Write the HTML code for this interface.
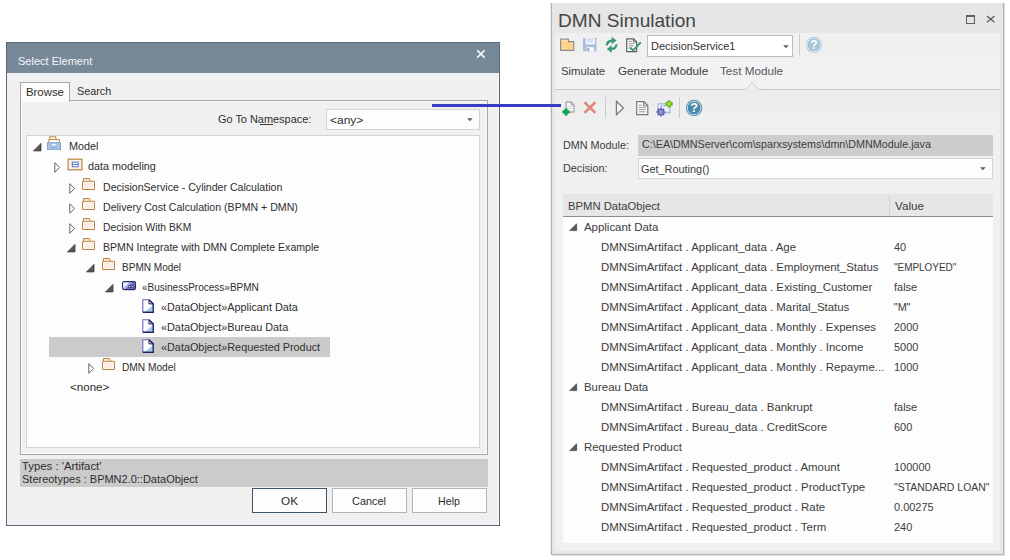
<!DOCTYPE html>
<html lang="en"><head><meta charset="utf-8"><title>DMN Simulation - Select Element</title>
<style>
html,body{margin:0;padding:0;background:#fff;}
body{width:1010px;height:560px;position:relative;overflow:hidden;font-family:"Liberation Sans", sans-serif;}
#root{position:absolute;left:0;top:0;width:1010px;height:560px;overflow:hidden;background:#fff;}
#root div,#root span,#root svg{position:absolute;}
.t{white-space:pre;line-height:20px;height:20px;}
</style></head><body><div id="root">
<div style="left:6px;top:42px;width:494px;height:484px;background:#f0f0f0;border:1px solid #596979;box-sizing:border-box;"></div>
<div style="left:498px;top:73px;width:1px;height:452px;background:#fafafa;"></div>
<div style="left:7px;top:43px;width:492px;height:30px;background:#778899;"></div>
<svg style="left:476px;top:49px" width="10" height="10" viewBox="0 0 10 10"><path d="M1.2 1.2 L8.6 8.6 M8.6 1.2 L1.2 8.6" stroke="#ffffff" stroke-width="1.5" fill="none"/></svg>
<div style="left:20px;top:100px;width:468px;height:355px;background:#f0f0f0;border:1px solid #a6a6a6;box-sizing:border-box;"></div>
<div style="left:21px;top:101px;width:466px;height:353px;border:1px solid #fbfbfb;box-sizing:border-box;"></div>
<div style="left:485px;top:102px;width:2px;height:351px;background:#f8f8f8;"></div>
<div style="left:20px;top:82px;width:50px;height:20px;background:#fcfcfc;border:1px solid #a6a6a6;box-sizing:border-box;border-bottom:none;"></div>
<div style="left:260px;top:124px;width:13px;height:1px;background:#383838;"></div>
<div style="left:326px;top:109px;width:154px;height:21px;background:#fdfdfd;border:1px solid #d2d2d2;box-sizing:border-box;"></div>
<svg style="left:466.8px;top:117.8px" width="6" height="4" viewBox="0 0 6 4"><path d="M0.2 0.3 H5.6 L2.9 3.2 Z" fill="#5a5a5a"/></svg>
<div style="left:26px;top:135px;width:454px;height:313px;background:#fdfdfd;border:1px solid #d4d4d4;box-sizing:border-box;"></div>
<div style="left:49px;top:337px;width:281px;height:20px;background:#cbcbcb;"></div>
<div style="left:20px;top:459px;width:468px;height:28px;background:#cbcbcb;"></div>
<div style="left:252px;top:488px;width:75px;height:25px;background:#fdfdfd;border:1px solid #3f5468;box-sizing:border-box;"></div>
<div style="left:332px;top:488px;width:75px;height:25px;background:#fdfdfd;border:1px solid #b4b4b4;box-sizing:border-box;"></div>
<div style="left:412px;top:488px;width:75px;height:25px;background:#fdfdfd;border:1px solid #b4b4b4;box-sizing:border-box;"></div>
<svg style="left:32.70px;top:142.50px" width="9" height="9" viewBox="0 0 9 9"><path d="M8 0.4 V7.9 H0.5 Z" fill="#595959" stroke="#3a3a3a" stroke-width="0.8"/></svg>
<svg style="left:46px;top:136px" width="16" height="14" viewBox="0 0 16 14"><path d="M3.7 3.2 V0.8 H9.9 V3.2" fill="#fefaf6" stroke="#bb853f" stroke-width="1"/><path d="M2.8 6.4 V3.5 H13.3 V6.4" fill="#fefaf6" stroke="#bb853f" stroke-width="1"/><rect x="1.5" y="6.7" width="13" height="7" fill="#a9c4e4" stroke="#7ba1d0" stroke-width="1"/><rect x="6" y="7.9" width="3.6" height="1.5" fill="#fafcff"/><path d="M5.3 11.4 H10.4" stroke="#86a9d6" stroke-width="0.9"/></svg>
<svg style="left:54.00px;top:162.00px" width="8" height="12" viewBox="0 0 8 12"><path d="M0.8 0.7 L5.7 5.5 L0.8 10.3 Z" fill="#fdfdfd" stroke="#666" stroke-width="1"/></svg>
<svg style="left:66.5px;top:157.5px" width="16" height="13" viewBox="0 0 16 13"><rect x="1.1" y="1.2" width="13.8" height="10.6" fill="#fdf1eb" stroke="#bb853f" stroke-width="1.2"/><rect x="5.2" y="4.1" width="6" height="4.7" fill="#f6f8ff" stroke="#3d62c8" stroke-width="0.85"/><path d="M5.2 6.45 H11.2" stroke="#3d62c8" stroke-width="0.85"/></svg>
<svg style="left:68.60px;top:183.00px" width="8" height="12" viewBox="0 0 8 12"><path d="M0.8 0.7 L5.7 5.5 L0.8 10.3 Z" fill="#fdfdfd" stroke="#666" stroke-width="1"/></svg>
<svg style="left:82px;top:178px" width="13" height="12" viewBox="0 0 13 12"><path d="M0.5 11.5 V3.3 H1.5 V0.5 H7.5 L8.5 3.3 H12.5 V11.5 Z" fill="#fefaf8" stroke="#bb853f" stroke-width="1"/><rect x="1.8" y="4.6" width="9.4" height="5.6" fill="#fdebe5"/><path d="M1.5 3.3 H8.5" stroke="#bb853f" stroke-width="1"/><path d="M2.3 1.9 H7.2" stroke="#e8cfae" stroke-width="0.8"/></svg>
<svg style="left:68.60px;top:203.00px" width="8" height="12" viewBox="0 0 8 12"><path d="M0.8 0.7 L5.7 5.5 L0.8 10.3 Z" fill="#fdfdfd" stroke="#666" stroke-width="1"/></svg>
<svg style="left:82px;top:198px" width="13" height="12" viewBox="0 0 13 12"><path d="M0.5 11.5 V3.3 H1.5 V0.5 H7.5 L8.5 3.3 H12.5 V11.5 Z" fill="#fefaf8" stroke="#bb853f" stroke-width="1"/><rect x="1.8" y="4.6" width="9.4" height="5.6" fill="#fdebe5"/><path d="M1.5 3.3 H8.5" stroke="#bb853f" stroke-width="1"/><path d="M2.3 1.9 H7.2" stroke="#e8cfae" stroke-width="0.8"/></svg>
<svg style="left:68.60px;top:223.00px" width="8" height="12" viewBox="0 0 8 12"><path d="M0.8 0.7 L5.7 5.5 L0.8 10.3 Z" fill="#fdfdfd" stroke="#666" stroke-width="1"/></svg>
<svg style="left:82px;top:218px" width="13" height="12" viewBox="0 0 13 12"><path d="M0.5 11.5 V3.3 H1.5 V0.5 H7.5 L8.5 3.3 H12.5 V11.5 Z" fill="#fefaf8" stroke="#bb853f" stroke-width="1"/><rect x="1.8" y="4.6" width="9.4" height="5.6" fill="#fdebe5"/><path d="M1.5 3.3 H8.5" stroke="#bb853f" stroke-width="1"/><path d="M2.3 1.9 H7.2" stroke="#e8cfae" stroke-width="0.8"/></svg>
<svg style="left:66.80px;top:243.50px" width="9" height="9" viewBox="0 0 9 9"><path d="M8 0.4 V7.9 H0.5 Z" fill="#595959" stroke="#3a3a3a" stroke-width="0.8"/></svg>
<svg style="left:82px;top:238px" width="13" height="12" viewBox="0 0 13 12"><path d="M0.5 11.5 V3.3 H1.5 V0.5 H7.5 L8.5 3.3 H12.5 V11.5 Z" fill="#fefaf8" stroke="#bb853f" stroke-width="1"/><rect x="1.8" y="4.6" width="9.4" height="5.6" fill="#fdebe5"/><path d="M1.5 3.3 H8.5" stroke="#bb853f" stroke-width="1"/><path d="M2.3 1.9 H7.2" stroke="#e8cfae" stroke-width="0.8"/></svg>
<svg style="left:85.90px;top:263.50px" width="9" height="9" viewBox="0 0 9 9"><path d="M8 0.4 V7.9 H0.5 Z" fill="#595959" stroke="#3a3a3a" stroke-width="0.8"/></svg>
<svg style="left:102px;top:258px" width="13" height="12" viewBox="0 0 13 12"><path d="M0.5 11.5 V3.3 H1.5 V0.5 H7.5 L8.5 3.3 H12.5 V11.5 Z" fill="#fefaf8" stroke="#bb853f" stroke-width="1"/><rect x="1.8" y="4.6" width="9.4" height="5.6" fill="#fdebe5"/><path d="M1.5 3.3 H8.5" stroke="#bb853f" stroke-width="1"/><path d="M2.3 1.9 H7.2" stroke="#e8cfae" stroke-width="0.8"/></svg>
<svg style="left:104.70px;top:283.50px" width="9" height="9" viewBox="0 0 9 9"><path d="M8 0.4 V7.9 H0.5 Z" fill="#595959" stroke="#3a3a3a" stroke-width="0.8"/></svg>
<svg style="left:122px;top:281px" width="15" height="10" viewBox="0 0 15 10"><defs><linearGradient id="bpg" gradientUnits="userSpaceOnUse" x1="0" y1="0" x2="10" y2="10"><stop offset="0" stop-color="#fdfdff"/><stop offset="0.40" stop-color="#f2f4ff"/><stop offset="0.43" stop-color="#a9b9f2"/><stop offset="0.57" stop-color="#9aa8ea"/><stop offset="0.6" stop-color="#7878c8"/><stop offset="1" stop-color="#6c6cc0"/></linearGradient></defs><rect x="0.6" y="0.6" width="12.9" height="7.9" rx="1.6" fill="url(#bpg)" stroke="#2a2a68" stroke-width="1.1"/><path d="M1.6 8.6 H12.6" stroke="#2a2a68" stroke-width="1.2"/><circle cx="7.5" cy="5.6" r="1.15" fill="#e8ecff" stroke="#20205a" stroke-width="0.9"/><circle cx="10.3" cy="5.6" r="1.15" fill="#e8ecff" stroke="#20205a" stroke-width="0.9"/></svg>
<svg style="left:142px;top:299px" width="12" height="14" viewBox="0 0 12 14"><path d="M0.8 0.7 H7 L11.2 4.9 V13.2 H0.8 Z" fill="#fefeff"/><path d="M10.6 6.6 V12.6 H3 Z" fill="#a6c8f4"/><path d="M7 0.7 V4.9 H11.2 Z" fill="#dfe8fb"/><path d="M0.8 13.2 V0.7 H7" fill="none" stroke="#6a6ac2" stroke-width="1.1"/><path d="M7 0.7 L11.2 4.9 V13.2 H0.8" fill="none" stroke="#1e1e60" stroke-width="1.4"/><path d="M7 0.7 V4.9 H11.2" fill="none" stroke="#1e1e60" stroke-width="1"/></svg>
<svg style="left:142px;top:319px" width="12" height="14" viewBox="0 0 12 14"><path d="M0.8 0.7 H7 L11.2 4.9 V13.2 H0.8 Z" fill="#fefeff"/><path d="M10.6 6.6 V12.6 H3 Z" fill="#a6c8f4"/><path d="M7 0.7 V4.9 H11.2 Z" fill="#dfe8fb"/><path d="M0.8 13.2 V0.7 H7" fill="none" stroke="#6a6ac2" stroke-width="1.1"/><path d="M7 0.7 L11.2 4.9 V13.2 H0.8" fill="none" stroke="#1e1e60" stroke-width="1.4"/><path d="M7 0.7 V4.9 H11.2" fill="none" stroke="#1e1e60" stroke-width="1"/></svg>
<svg style="left:142px;top:339px" width="12" height="14" viewBox="0 0 12 14"><path d="M0.8 0.7 H7 L11.2 4.9 V13.2 H0.8 Z" fill="#fefeff"/><path d="M10.6 6.6 V12.6 H3 Z" fill="#a6c8f4"/><path d="M7 0.7 V4.9 H11.2 Z" fill="#dfe8fb"/><path d="M0.8 13.2 V0.7 H7" fill="none" stroke="#6a6ac2" stroke-width="1.1"/><path d="M7 0.7 L11.2 4.9 V13.2 H0.8" fill="none" stroke="#1e1e60" stroke-width="1.4"/><path d="M7 0.7 V4.9 H11.2" fill="none" stroke="#1e1e60" stroke-width="1"/></svg>
<svg style="left:87.60px;top:363.00px" width="8" height="12" viewBox="0 0 8 12"><path d="M0.8 0.7 L5.7 5.5 L0.8 10.3 Z" fill="#fdfdfd" stroke="#666" stroke-width="1"/></svg>
<svg style="left:102px;top:358px" width="13" height="12" viewBox="0 0 13 12"><path d="M0.5 11.5 V3.3 H1.5 V0.5 H7.5 L8.5 3.3 H12.5 V11.5 Z" fill="#fefaf8" stroke="#bb853f" stroke-width="1"/><rect x="1.8" y="4.6" width="9.4" height="5.6" fill="#fdebe5"/><path d="M1.5 3.3 H8.5" stroke="#bb853f" stroke-width="1"/><path d="M2.3 1.9 H7.2" stroke="#e8cfae" stroke-width="0.8"/></svg>
<div style="left:550px;top:3px;width:1px;height:551px;background:#ececec;"></div>
<div style="left:551px;top:3px;width:453px;height:551.6px;background:#e6e6e6;border:1px solid #b2b2b2;box-sizing:border-box;border-top:none;"></div>
<div style="left:1004px;top:3px;width:1px;height:552px;background:#dedede;"></div>
<div style="left:552px;top:554.6px;width:453px;height:1px;background:#e2e2e2;"></div>
<div style="left:555px;top:33px;width:445px;height:518px;background:#f0f0f0;"></div>
<div style="left:555px;top:58.5px;width:445px;height:30.5px;background:#f2f2f2;"></div>
<div style="left:555px;top:90px;width:445px;height:34px;background:linear-gradient(#ececec,#f0f0f0);"></div>
<div style="left:555px;top:89px;width:445px;height:1px;background:#c9c9c9;"></div>
<svg style="left:745px;top:81px" width="15" height="10" viewBox="0 0 15 10"><path d="M1 8.5 L7.2 1.6 L13.4 8.5 V9.6 H1 Z" fill="#f0f0f0"/><path d="M1 8.5 L7.2 1.6 L13.4 8.5" fill="none" stroke="#c9c9c9" stroke-width="1"/></svg>
<div style="left:966px;top:15px;width:9px;height:9px;border:1px solid #606060;box-sizing:border-box;border-top-width:2px;"></div>
<svg style="left:986.3px;top:15.1px" width="10" height="9" viewBox="0 0 10 9"><path d="M0.9 0.9 L8.5 7.3 M8.5 0.9 L0.9 7.3" stroke="#5c5c5c" stroke-width="1.25" fill="none"/></svg>
<svg style="left:559.5px;top:38.4px" width="15" height="13" viewBox="0 0 15 13"><path d="M0.6 12.4 V1.1 H8.4 V3.6 H13.8 V12.4 Z" fill="#fbd58e" stroke="#8c8c8c" stroke-width="1.1"/><path d="M1.4 2.3 H7.6" stroke="#fde3ae" stroke-width="1"/></svg>
<svg style="left:583px;top:38px" width="14" height="14" viewBox="0 0 14 14"><rect x="0" y="0" width="13.4" height="13.3" fill="#a9bddd"/><rect x="2.7" y="0.3" width="9.3" height="6" fill="#fbfcfe"/><path d="M4 1.9 H10.6 M4 3.9 H10.6" stroke="#a4b8dc" stroke-width="0.8"/><rect x="3.5" y="9.2" width="7.6" height="4.1" fill="#fbfcfe"/><rect x="4.3" y="10" width="2" height="3.3" fill="#8ea6d0"/><rect x="12.2" y="0.6" width="0.8" height="0.8" fill="#6a82b8"/></svg>
<svg style="left:604.3px;top:36.2px" width="15.4" height="17.6" viewBox="0 0 14 16"><path d="M1.6 8.4 A5.2 5.2 0 0 1 7 3.2 V0.6 L11.4 4.2 L7 7.6 V5.4 A3.2 3.2 0 0 0 3.6 8.6 Z" fill="#3a9a72"/><path d="M12.4 7.6 A5.2 5.2 0 0 1 7 12.8 V15.4 L2.6 11.8 L7 8.4 V10.6 A3.2 3.2 0 0 0 10.4 7.4 Z" fill="#3a9a72"/></svg>
<svg style="left:626px;top:38px" width="16" height="15" viewBox="0 0 16 15"><path d="M0.7 0.8 H7.6 L10.6 3.8 V13.6 H0.7 Z" fill="#fafafa" stroke="#606060" stroke-width="1.2"/><path d="M7.4 0.8 V4 H10.6" fill="none" stroke="#606060" stroke-width="1"/><path d="M2.6 3.4 H6 M2.6 5.6 H8 M2.6 7.8 H8 M2.6 10 H5" stroke="#8a8a8a" stroke-width="0.9"/><path d="M4 9.4 L7.2 12.4 L14.8 4.2" fill="none" stroke="#3a9a72" stroke-width="2"/></svg>
<div style="left:647px;top:35px;width:146px;height:22px;background:#ffffff;border:1px solid #bcbcbc;box-sizing:border-box;"></div>
<svg style="left:782.8px;top:44.6px" width="6" height="4" viewBox="0 0 6 4"><path d="M0.2 0.3 H5.6 L2.9 3.2 Z" fill="#5a5a5a"/></svg>
<div style="left:799px;top:34px;width:1px;height:21px;background:#cbcbcb;"></div>
<svg style="left:805px;top:36px" width="18" height="18" viewBox="0 0 18 18"><circle cx="9" cy="8.8" r="8" fill="#a6c4d5"/><circle cx="9" cy="8.8" r="6.8" fill="none" stroke="#f2f6f8" stroke-width="0.8"/><text x="9" y="13.1" font-family="Liberation Sans, sans-serif" font-weight="bold" font-size="12" fill="#ffffff" text-anchor="middle">?</text></svg>
<svg style="left:561.5px;top:100.5px" width="14" height="15" viewBox="0 0 14 15"><path d="M4.1 1 H9.4 L12 3.6 V11 H4.1 Z" fill="#fbfbfb" stroke="#8c8c8c" stroke-width="1"/><path d="M9.2 1 V3.8 H12" fill="none" stroke="#8c8c8c" stroke-width="0.9"/><path d="M5.6 3.6 H6.4 M5.6 5.6 H10.4 M5.6 7.6 H10.4" stroke="#c4c4c4" stroke-width="0.8"/><path d="M4.05 7.4 V14.4 M0.5 10.9 H7.6" stroke="#10a050" stroke-width="3.1"/></svg>
<svg style="left:582.6px;top:100.9px" width="14" height="13" viewBox="0 0 14 13"><path d="M1.5 1.3 L12.3 11.9 M12.3 1.3 L1.5 11.9" stroke="#dd8a7c" stroke-width="2.7" fill="none"/></svg>
<div style="left:605px;top:97px;width:1px;height:21px;background:#cbcbcb;"></div>
<svg style="left:615px;top:100px" width="10" height="16" viewBox="0 0 10 16"><path d="M1.4 1.3 L8.4 8 L1.4 14.8 Z" fill="#f6f6f6" stroke="#787878" stroke-width="1.2"/></svg>
<svg style="left:636px;top:101px" width="13" height="15" viewBox="0 0 13 15"><path d="M0.7 0.7 H7.8 L11.8 4.6 V13.6 H0.7 Z" fill="#fbfbfb" stroke="#787878" stroke-width="1.2"/><path d="M7.6 0.7 V4.8 H11.8" fill="none" stroke="#787878" stroke-width="1"/><path d="M2.8 6.4 H9.6 M2.8 8.6 H9.6 M2.8 10.8 H9.6 M2.8 4.2 H5.6" stroke="#8a8a8a" stroke-width="0.9"/></svg>
<svg style="left:655.5px;top:99.5px" width="18" height="17" viewBox="0 0 18 17"><defs><linearGradient id="wg" x1="0" y1="0" x2="1" y2="1"><stop offset="0" stop-color="#ffffff"/><stop offset="1" stop-color="#dfe6f8"/></linearGradient></defs><rect x="2.1" y="3.9" width="11.8" height="8.9" fill="url(#wg)" stroke="#97a7cf" stroke-width="1"/><path d="M4.4 5.9 H6.4 M7.6 5.9 H9.6" stroke="#4a78e0" stroke-width="1"/><circle cx="4.9" cy="12" r="3.5" fill="#6a68cc"/><path d="M4.9 7.4 V16.6 M0.3 12 H9.5 M1.7 8.8 L8.1 15.2 M8.1 8.8 L1.7 15.2" stroke="#5f5cc4" stroke-width="1.7"/><circle cx="4.9" cy="12" r="2.4" fill="#8482dc"/><circle cx="4.9" cy="12" r="1" fill="#86e000"/><path d="M13.1 0.4 V7.3 M9.6 3.85 H16.6" stroke="#48a008" stroke-width="3.2"/><path d="M13.1 1.3 V6.4 M10.5 3.85 H15.7" stroke="#b4f028" stroke-width="1.3"/></svg>
<div style="left:679px;top:97px;width:1px;height:21px;background:#cbcbcb;"></div>
<svg style="left:685px;top:99px" width="19" height="19" viewBox="0 0 19 19"><circle cx="9.1" cy="9" r="8.2" fill="#4a8ba9"/><circle cx="9.1" cy="9" r="6.9" fill="none" stroke="#eef4f7" stroke-width="0.8"/><text x="9.1" y="13.4" font-family="Liberation Sans, sans-serif" font-weight="bold" font-size="12.5" fill="#ffffff" text-anchor="middle">?</text></svg>
<div style="left:638px;top:135px;width:355px;height:21px;background:#cdcdcd;"></div>
<div style="left:638px;top:158px;width:355px;height:21px;background:#fdfdfd;border:1px solid #d2d2d2;box-sizing:border-box;"></div>
<svg style="left:979.8px;top:166.8px" width="6" height="4" viewBox="0 0 6 4"><path d="M0.2 0.3 H5.6 L2.9 3.2 Z" fill="#5a5a5a"/></svg>
<div style="left:563px;top:194px;width:430px;height:348.5px;background:#fdfdfd;"></div>
<div style="left:563px;top:194px;width:430px;height:22px;background:#e6e6e6;"></div>
<div style="left:563px;top:216px;width:430px;height:1px;background:#8e8e8e;"></div>
<div style="left:889px;top:195px;width:1px;height:21px;background:#d4d4d4;"></div>
<svg style="left:569px;top:223.4px" width="9" height="9" viewBox="0 0 9 9"><path d="M7.6 0.8 V7.6 H0.8 Z" fill="#5a5a5a" stroke="#404040" stroke-width="0.7"/></svg>
<svg style="left:569px;top:383.4px" width="9" height="9" viewBox="0 0 9 9"><path d="M7.6 0.8 V7.6 H0.8 Z" fill="#5a5a5a" stroke="#404040" stroke-width="0.7"/></svg>
<svg style="left:569px;top:443.4px" width="9" height="9" viewBox="0 0 9 9"><path d="M7.6 0.8 V7.6 H0.8 Z" fill="#5a5a5a" stroke="#404040" stroke-width="0.7"/></svg>
<div style="left:432px;top:104px;width:129px;height:3px;background:#353dc5;"></div>
<span class="t" id="t0" style="left:17.99px;top:51.00px;font-size:10.9px;color:#f4f6f8;transform:scaleX(1.0130);transform-origin:0 0;">Select Element</span>
<span class="t" id="t1" style="left:26.11px;top:82.00px;font-size:11.5px;color:#2e2e2e;transform:scaleX(0.9880);transform-origin:0 0;">Browse</span>
<span class="t" id="t2" style="left:76.93px;top:81.00px;font-size:11.5px;color:#2e2e2e;transform:scaleX(0.9386);transform-origin:0 0;">Search</span>
<span class="t" id="t3" style="left:217.53px;top:109.00px;font-size:11.5px;color:#2e2e2e;transform:scaleX(0.9498);transform-origin:0 0;">Go To Namespace:</span>
<span class="t" id="t4" style="left:330.38px;top:110.00px;font-size:11.5px;color:#2e2e2e;transform:scaleX(1.0411);transform-origin:0 0;">&lt;any&gt;</span>
<span class="t" id="t5" style="left:22.11px;top:456.00px;font-size:11.5px;color:#2e2e2e;transform:scaleX(0.9869);transform-origin:0 0;">Types : &#x27;Artifact&#x27;</span>
<span class="t" id="t6" style="left:22.12px;top:469.00px;font-size:11.5px;color:#2e2e2e;transform:scaleX(0.9555);transform-origin:0 0;">Stereotypes : BPMN2.0::DataObject</span>
<span class="t" id="t7" style="left:280.99px;top:491.00px;font-size:11.5px;color:#2e2e2e;transform:scaleX(1.0226);transform-origin:0 0;">OK</span>
<span class="t" id="t8" style="left:352.03px;top:491.00px;font-size:11.5px;color:#2e2e2e;transform:scaleX(0.9494);transform-origin:0 0;">Cancel</span>
<span class="t" id="t9" style="left:438.04px;top:491.00px;font-size:11.5px;color:#2e2e2e;transform:scaleX(0.9300);transform-origin:0 0;">Help</span>
<span class="t" id="t10" style="left:69.03px;top:136.00px;font-size:11.5px;color:#2e2e2e;transform:scaleX(0.9416);transform-origin:0 0;">Model</span>
<span class="t" id="t11" style="left:88.23px;top:156.00px;font-size:11.5px;color:#2e2e2e;transform:scaleX(0.9384);transform-origin:0 0;">data modeling</span>
<span class="t" id="t12" style="left:102.74px;top:177.00px;font-size:11.5px;color:#2e2e2e;transform:scaleX(0.9197);transform-origin:0 0;">DecisionService - Cylinder Calculation</span>
<span class="t" id="t13" style="left:102.74px;top:197.00px;font-size:11.5px;color:#2e2e2e;transform:scaleX(0.9195);transform-origin:0 0;">Delivery Cost Calculation (BPMN + DMN)</span>
<span class="t" id="t14" style="left:102.75px;top:217.00px;font-size:11.5px;color:#2e2e2e;transform:scaleX(0.8972);transform-origin:0 0;">Decision With BKM</span>
<span class="t" id="t15" style="left:102.74px;top:237.00px;font-size:11.5px;color:#2e2e2e;transform:scaleX(0.9192);transform-origin:0 0;">BPMN Integrate with DMN Complete Example</span>
<span class="t" id="t16" style="left:121.96px;top:257.00px;font-size:11.5px;color:#2e2e2e;transform:scaleX(0.8723);transform-origin:0 0;">BPMN Model</span>
<span class="t" id="t17" style="left:142.06px;top:277.00px;font-size:11.5px;color:#2e2e2e;transform:scaleX(0.8701);transform-origin:0 0;">«BusinessProcess»BPMN</span>
<span class="t" id="t18" style="left:160.73px;top:297.00px;font-size:11.5px;color:#2e2e2e;transform:scaleX(0.9427);transform-origin:0 0;">«DataObject»Applicant Data</span>
<span class="t" id="t19" style="left:160.73px;top:317.00px;font-size:11.5px;color:#2e2e2e;transform:scaleX(0.9427);transform-origin:0 0;">«DataObject»Bureau Data</span>
<span class="t" id="t20" style="left:160.73px;top:337.00px;font-size:11.5px;color:#2e2e2e;transform:scaleX(0.9427);transform-origin:0 0;">«DataObject»Requested Product</span>
<span class="t" id="t21" style="left:121.96px;top:357.00px;font-size:11.5px;color:#2e2e2e;transform:scaleX(0.8844);transform-origin:0 0;">DMN Model</span>
<span class="t" id="t22" style="left:70.10px;top:377.00px;font-size:11.5px;color:#2e2e2e;transform:scaleX(1.0073);transform-origin:0 0;">&lt;none&gt;</span>
<span class="t" id="t23" style="left:557.78px;top:11.00px;font-size:18.2px;color:#454545;transform:scaleX(1.0495);transform-origin:0 0;">DMN Simulation</span>
<span class="t" id="t24" style="left:651.19px;top:36.00px;font-size:10.8px;color:#333;transform:scaleX(1.0105);transform-origin:0 0;">DecisionService1</span>
<span class="t" id="t25" style="left:560.88px;top:61.00px;font-size:10.8px;color:#3c3c3c;transform:scaleX(1.0496);transform-origin:0 0;">Simulate</span>
<span class="t" id="t26" style="left:617.86px;top:61.00px;font-size:10.8px;color:#3c3c3c;transform:scaleX(1.0810);transform-origin:0 0;">Generate Module</span>
<span class="t" id="t27" style="left:720.46px;top:61.00px;font-size:10.8px;color:#585862;transform:scaleX(1.0821);transform-origin:0 0;">Test Module</span>
<span class="t" id="t28" style="left:563.23px;top:135.00px;font-size:11.5px;color:#3c3c3c;transform:scaleX(0.9387);transform-origin:0 0;">DMN Module:</span>
<span class="t" id="t29" style="left:642.03px;top:134.00px;font-size:11.5px;color:#3c3c3c;transform:scaleX(0.9359);transform-origin:0 0;">C:\EA\DMNServer\com\sparxsystems\dmn\DMNModule.java</span>
<span class="t" id="t30" style="left:563.23px;top:158.00px;font-size:11.5px;color:#3c3c3c;transform:scaleX(0.9427);transform-origin:0 0;">Decision:</span>
<span class="t" id="t31" style="left:641.33px;top:159.00px;font-size:11.5px;color:#3c3c3c;transform:scaleX(0.9469);transform-origin:0 0;">Get_Routing()</span>
<span class="t" id="t32" style="left:567.98px;top:196.00px;font-size:10.8px;color:#3c3c3c;transform:scaleX(1.0429);transform-origin:0 0;">BPMN DataObject</span>
<span class="t" id="t33" style="left:895.06px;top:196.00px;font-size:10.8px;color:#3c3c3c;transform:scaleX(1.0810);transform-origin:0 0;">Value</span>
<span class="t" id="t34" style="left:583.67px;top:217.00px;font-size:10.8px;color:#3c3c3c;transform:scaleX(1.0584);transform-origin:0 0;">Applicant Data</span>
<span class="t" id="t35" style="left:601.07px;top:237.00px;font-size:10.8px;color:#3c3c3c;transform:scaleX(1.0584);transform-origin:0 0;">DMNSimArtifact . Applicant_data . Age</span>
<span class="t" id="t36" style="left:893.79px;top:237.00px;font-size:10.8px;color:#3c3c3c;transform:scaleX(1.0150);transform-origin:0 0;">40</span>
<span class="t" id="t37" style="left:601.07px;top:257.00px;font-size:10.8px;color:#3c3c3c;transform:scaleX(1.0584);transform-origin:0 0;">DMNSimArtifact . Applicant_data . Employment_Status</span>
<span class="t" id="t38" style="left:893.84px;top:257.00px;font-size:10.8px;color:#3c3c3c;transform:scaleX(0.9191);transform-origin:0 0;">&quot;EMPLOYED&quot;</span>
<span class="t" id="t39" style="left:601.07px;top:277.00px;font-size:10.8px;color:#3c3c3c;transform:scaleX(1.0584);transform-origin:0 0;">DMNSimArtifact . Applicant_data . Existing_Customer</span>
<span class="t" id="t40" style="left:893.79px;top:277.00px;font-size:10.8px;color:#3c3c3c;transform:scaleX(1.0150);transform-origin:0 0;">false</span>
<span class="t" id="t41" style="left:601.07px;top:297.00px;font-size:10.8px;color:#3c3c3c;transform:scaleX(1.0584);transform-origin:0 0;">DMNSimArtifact . Applicant_data . Marital_Status</span>
<span class="t" id="t42" style="left:893.80px;top:297.00px;font-size:10.8px;color:#3c3c3c;">&quot;M&quot;</span>
<span class="t" id="t43" style="left:601.07px;top:317.00px;font-size:10.8px;color:#3c3c3c;transform:scaleX(1.0584);transform-origin:0 0;">DMNSimArtifact . Applicant_data . Monthly . Expenses</span>
<span class="t" id="t44" style="left:893.79px;top:317.00px;font-size:10.8px;color:#3c3c3c;transform:scaleX(1.0150);transform-origin:0 0;">2000</span>
<span class="t" id="t45" style="left:601.07px;top:337.00px;font-size:10.8px;color:#3c3c3c;transform:scaleX(1.0584);transform-origin:0 0;">DMNSimArtifact . Applicant_data . Monthly . Income</span>
<span class="t" id="t46" style="left:893.79px;top:337.00px;font-size:10.8px;color:#3c3c3c;transform:scaleX(1.0150);transform-origin:0 0;">5000</span>
<span class="t" id="t47" style="left:601.07px;top:357.00px;font-size:10.8px;color:#3c3c3c;transform:scaleX(1.0584);transform-origin:0 0;">DMNSimArtifact . Applicant_data . Monthly . Repayme...</span>
<span class="t" id="t48" style="left:893.79px;top:357.00px;font-size:10.8px;color:#3c3c3c;transform:scaleX(1.0150);transform-origin:0 0;">1000</span>
<span class="t" id="t49" style="left:583.67px;top:377.00px;font-size:10.8px;color:#3c3c3c;transform:scaleX(1.0584);transform-origin:0 0;">Bureau Data</span>
<span class="t" id="t50" style="left:601.07px;top:397.00px;font-size:10.8px;color:#3c3c3c;transform:scaleX(1.0584);transform-origin:0 0;">DMNSimArtifact . Bureau_data . Bankrupt</span>
<span class="t" id="t51" style="left:893.79px;top:397.00px;font-size:10.8px;color:#3c3c3c;transform:scaleX(1.0150);transform-origin:0 0;">false</span>
<span class="t" id="t52" style="left:601.07px;top:417.00px;font-size:10.8px;color:#3c3c3c;transform:scaleX(1.0584);transform-origin:0 0;">DMNSimArtifact . Bureau_data . CreditScore</span>
<span class="t" id="t53" style="left:893.79px;top:417.00px;font-size:10.8px;color:#3c3c3c;transform:scaleX(1.0150);transform-origin:0 0;">600</span>
<span class="t" id="t54" style="left:583.67px;top:437.00px;font-size:10.8px;color:#3c3c3c;transform:scaleX(1.0584);transform-origin:0 0;">Requested Product</span>
<span class="t" id="t55" style="left:601.07px;top:457.00px;font-size:10.8px;color:#3c3c3c;transform:scaleX(1.0584);transform-origin:0 0;">DMNSimArtifact . Requested_product . Amount</span>
<span class="t" id="t56" style="left:893.79px;top:457.00px;font-size:10.8px;color:#3c3c3c;transform:scaleX(1.0150);transform-origin:0 0;">100000</span>
<span class="t" id="t57" style="left:601.07px;top:477.00px;font-size:10.8px;color:#3c3c3c;transform:scaleX(1.0584);transform-origin:0 0;">DMNSimArtifact . Requested_product . ProductType</span>
<span class="t" id="t58" style="left:893.82px;top:477.00px;font-size:10.8px;color:#3c3c3c;transform:scaleX(0.9680);transform-origin:0 0;">&quot;STANDARD LOAN&quot;</span>
<span class="t" id="t59" style="left:601.07px;top:497.00px;font-size:10.8px;color:#3c3c3c;transform:scaleX(1.0584);transform-origin:0 0;">DMNSimArtifact . Requested_product . Rate</span>
<span class="t" id="t60" style="left:893.79px;top:497.00px;font-size:10.8px;color:#3c3c3c;transform:scaleX(1.0150);transform-origin:0 0;">0.00275</span>
<span class="t" id="t61" style="left:601.07px;top:517.00px;font-size:10.8px;color:#3c3c3c;transform:scaleX(1.0584);transform-origin:0 0;">DMNSimArtifact . Requested_product . Term</span>
<span class="t" id="t62" style="left:893.79px;top:517.00px;font-size:10.8px;color:#3c3c3c;transform:scaleX(1.0150);transform-origin:0 0;">240</span>
</div></body></html>
